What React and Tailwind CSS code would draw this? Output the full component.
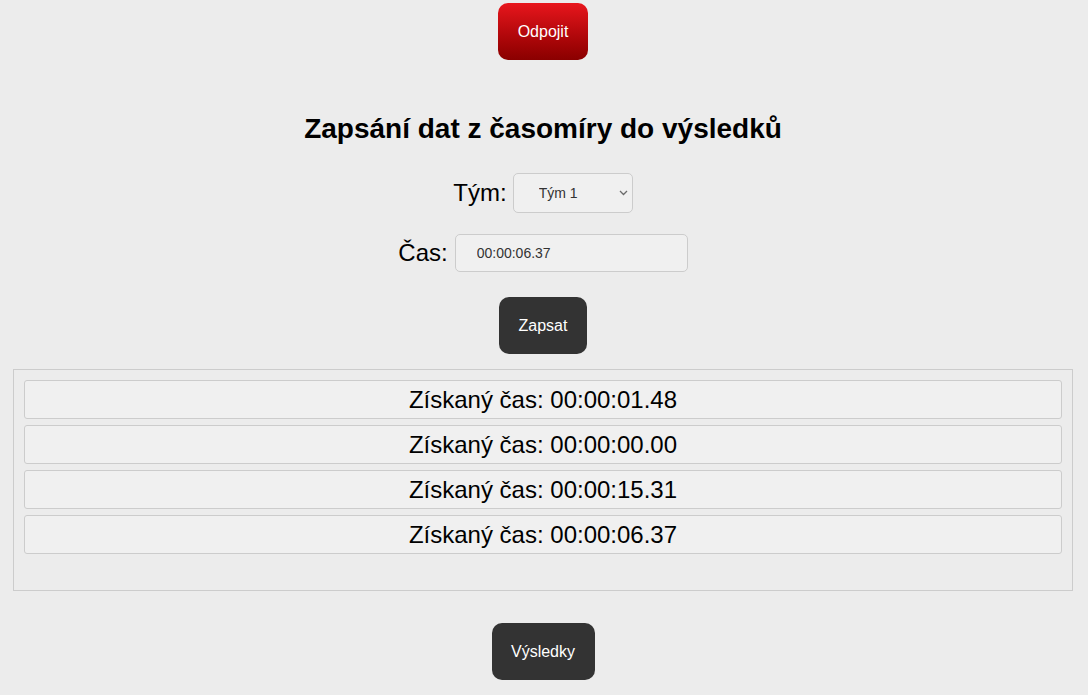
import { useState } from 'react';

const times = ['00:00:01.48', '00:00:00.00', '00:00:15.31', '00:00:06.37'];

const App = () => {
  const [team, setTeam] = useState('1');
  const [time, setTime] = useState('00:00:06.37');

  return (
    <div
      className="min-h-[695px] bg-[#ececec] text-black flex flex-col items-center pr-[2px]"
      style={{ fontFamily: '"Liberation Sans", Arial, sans-serif' }}
    >
      {/* Odpojit */}
      <button className="mt-[3px] h-[57px] w-[90px] rounded-[10px] bg-gradient-to-b from-[#e8161c] to-[#8a0000] text-white text-[16px]">
        Odpojit
      </button>

      <h2 className="mt-[52px] h-[34px] leading-[34px] text-[28px] font-bold">
        Zapsání dat z časomíry do výsledků
      </h2>

      {/* Tým */}
      <div className="mt-[27px] flex items-center gap-[6px]">
        <label className="text-[24px] leading-[28px]">Tým:</label>
        <div className="relative">
          <select
            value={team}
            onChange={(e) => setTeam(e.target.value)}
            className="appearance-none h-[40px] w-[120px] rounded-[5px] border border-[#cccccc] bg-[#f0f0f0] pl-[25px] text-[14px] text-[#333333] outline-none"
          >
            <option value="1">Tým 1</option>
            <option value="2">Tým 2</option>
          </select>
          <svg
            className="pointer-events-none absolute right-[5px] top-[17px]"
            width="9"
            height="6"
            viewBox="0 0 9 6"
            fill="none"
          >
            <path d="M1 1l3.5 3.5L8 1" stroke="#6b6b6b" strokeWidth="1.3" />
          </svg>
        </div>
      </div>

      {/* Čas */}
      <div className="mt-[21px] flex items-center gap-[7px]">
        <label className="text-[24px] leading-[28px]">Čas:</label>
        <input
          value={time}
          onChange={(e) => setTime(e.target.value)}
          className="h-[38px] w-[233px] rounded-[5px] border border-[#cccccc] bg-[#f0f0f0] pl-[21px] text-[14px] text-[#333333] outline-none"
        />
      </div>

      <button className="mt-[25px] h-[57px] w-[88px] rounded-[10px] bg-[#333333] text-white text-[16px]">
        Zapsat
      </button>

      {/* Získané časy */}
      <div className="mt-[15px] w-[1060px] h-[222px] border border-[#cccccc] px-[10px] pt-[10px]">
        <div className="flex flex-col gap-[6px]">
          {times.map((t, i) => (
            <div
              key={i}
              className="h-[39px] rounded-[3px] border border-[#cccccc] bg-[#f0f0f0] flex items-center justify-center text-[24px]"
            >
              Získaný čas: {t}
            </div>
          ))}
        </div>
      </div>

      <button className="mt-[32px] h-[57px] w-[103px] rounded-[10px] bg-[#333333] text-white text-[16px]">
        Výsledky
      </button>
    </div>
  );
};

export default App;
